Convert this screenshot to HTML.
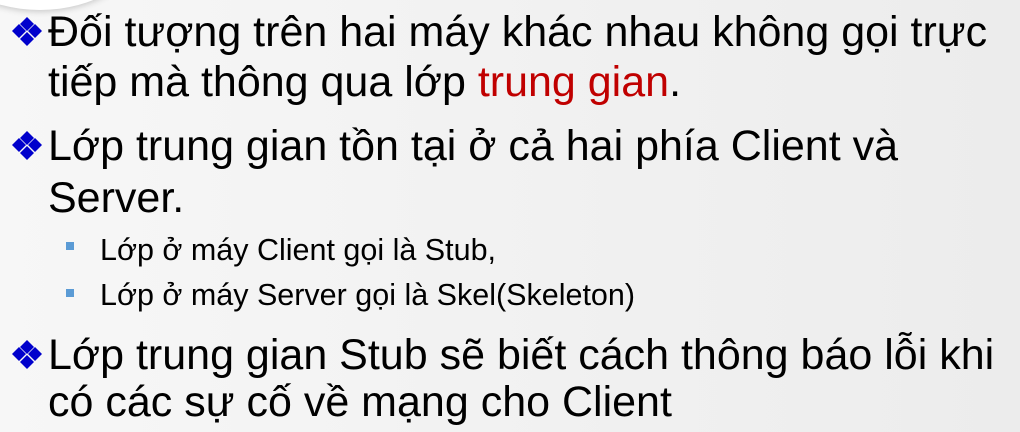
<!DOCTYPE html>
<html><head><meta charset="utf-8"><style>
body{margin:0;width:1020px;height:432px;overflow:hidden;background:linear-gradient(90deg,#f7f7f7,#ececec);font-family:"Liberation Sans",Arial,sans-serif;position:relative}
.l{position:absolute;left:48px;font-size:43px;color:#000;white-space:nowrap;line-height:50px}
.b{position:absolute;left:12px;width:30px;height:30px}
.s{position:absolute;left:100px;font-size:30.5px;white-space:nowrap;line-height:34px}
.q{position:absolute;left:66px;width:8px;height:8px;background:#5b9bd5}
.r{color:#c00000}
</style></head><body>
<div style="position:absolute;left:-60px;top:-120px;width:200px;height:130px;border-radius:50%;background:#fff;box-shadow:0 2px 6px #ccc"></div>
<svg width="0" height="0" style="position:absolute"><defs><g id="d" fill="#0000cc"><path d="M15 1l7 7-7 7-7-7z"/><path d="M15 16l7 7-7 7-7-7z"/><path d="M7 8l7 7-7 7-7-7z"/><path d="M23 8l7 7-7 7-7-7z"/></g></defs></svg>
<svg class="b" style="top:16px"><use href="#d"/></svg>
<div class="l" style="top:7px">Đối tượng trên hai máy khác nhau không gọi trực</div>
<div class="l" style="top:57px">tiếp mà thông qua lớp <span class="r">trung gian</span>.</div>
<svg class="b" style="top:130px"><use href="#d"/></svg>
<div class="l" style="top:121px">Lớp trung gian tồn tại ở cả hai phía Client và</div>
<div class="l" style="top:173px">Server.</div>
<div class="q" style="top:242px"></div>
<div class="s" style="top:233px">Lớp ở máy Client gọi là Stub,</div>
<div class="q" style="top:289px"></div>
<div class="s" style="top:278px">Lớp ở máy Server gọi là Skel(Skeleton)</div>
<svg class="b" style="top:339px"><use href="#d"/></svg>
<div class="l" style="top:330px">Lớp trung gian Stub sẽ biết cách thông báo lỗi khi</div>
<div class="l" style="top:377px">có các sự cố về mạng cho Client</div>
</body></html>
